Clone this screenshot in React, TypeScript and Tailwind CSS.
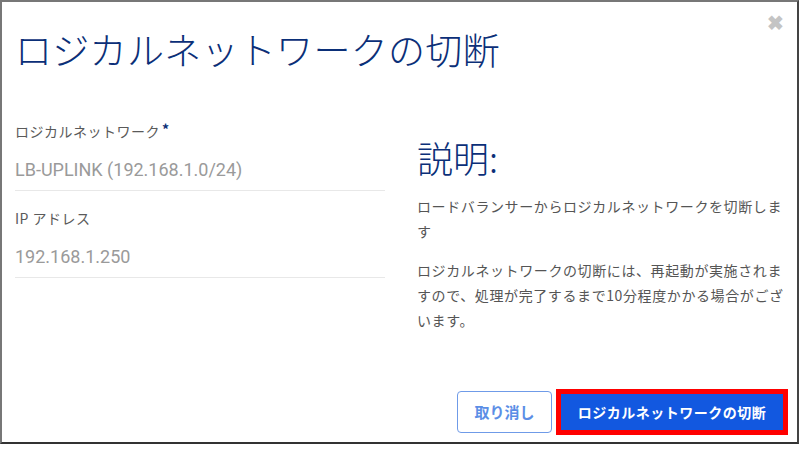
import React from 'react';

const jp = "font-['Noto_Sans_CJK_JP','Noto_Sans',Roboto,sans-serif]";

function Field({ label, value, required }: { label: string; value: string; required?: boolean }) {
    return (
        <div className="flex flex-col">
            <div className="text-[14px] leading-[20px] text-[#5a5a5a] tracking-[0.5px]">
                {label}
                {required && <sup className="text-[#0b2f78] text-[14px] font-bold ml-[2px] relative -top-[2px]">*</sup>}
            </div>
            <div className="mt-[17px] pb-[8px] border-b border-[#e8e8e8] text-[18px] leading-[24px] text-[#9a9a9a] font-['Roboto','Noto_Sans_CJK_JP',sans-serif]">
                {value}
            </div>
        </div>
    );
}

export default function App() {
    return (
        <div className={`w-[800px] h-[465px] bg-white ${jp}`}>
            <div className="w-[799px] h-[444px] border-t-2 border-l-2 border-[#777] border-r-2 border-r-[#444] border-b-2 border-b-[#333] relative flex flex-col">
                <button className="absolute right-[13px] top-[10px] text-[#c4c4c4] text-[20px] font-bold leading-none">✖</button>

                <h1 className="pl-[13px] pt-[23px] text-[37px] leading-[48px] text-[#0b2f78] font-light tracking-[0.3px]">
                    ロジカルネットワークの切断
                </h1>

                <div className="flex mt-[48px] flex-1">
                    <div className="w-[370px] ml-[13px] flex flex-col gap-[17px]">
                        <Field label="ロジカルネットワーク" value="LB-UPLINK (192.168.1.0/24)" required />
                        <Field label="IP アドレス" value="192.168.1.250" />
                    </div>

                    <div className="ml-[32px] w-[370px] pt-[14px]">
                        <h2 className="text-[36px] leading-[44px] text-[#0b2f78] font-light">説明:</h2>
                        <p className="mt-[15px] text-[14px] leading-[25px] text-[#555] tracking-[0.6px]">
                            ロードバランサーからロジカルネットワークを切断します
                        </p>
                        <p className="mt-[14px] text-[14px] leading-[25px] text-[#555] tracking-[0.6px]">
                            ロジカルネットワークの切断には、再起動が実施されますので、処理が完了するまで10分程度かかる場合がございます。
                        </p>
                    </div>
                </div>

                <div className="flex justify-end items-center gap-[4px] pr-[9px] pb-[7px]">
                    <button className="h-[42px] w-[95px] rounded-[4px] border-[1.5px] border-[#6f9be8] text-[#5b8ee6] text-[15px] font-bold">
                        取り消し
                    </button>
                    <div className="border-[5px] border-[#ff0000]">
                        <button className="h-[36px] w-[222px] bg-[#1258e0] text-white text-[14px] font-bold tracking-[0.5px]">
                            ロジカルネットワークの切断
                        </button>
                    </div>
                </div>
            </div>
        </div>
    );
}
